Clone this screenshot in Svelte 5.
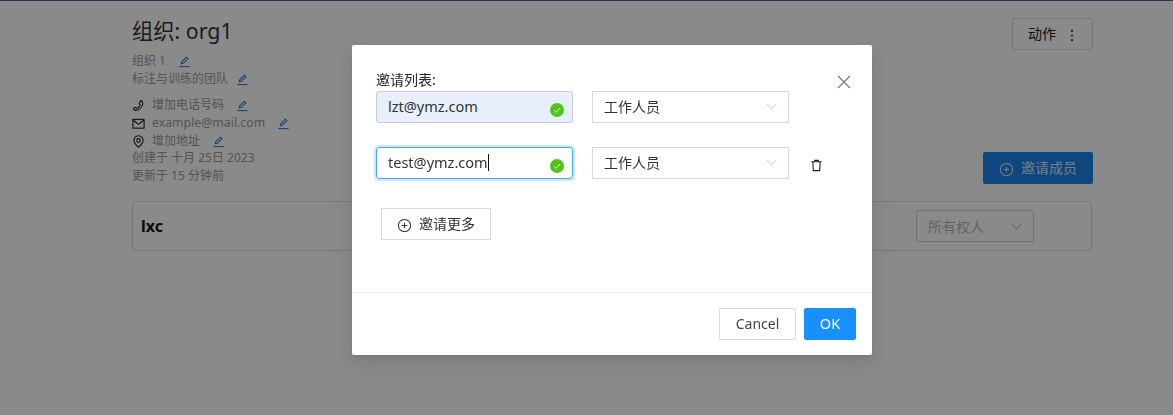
<script>
    const invites = [
        { email: 'lzt@ymz.com', autofill: true, focused: false, removable: false },
        { email: 'test@ymz.com', autofill: false, focused: true, removable: true },
    ];
</script>

<div class="page">
    <header class="top">
        <div class="info">
            <h1>组织: org1</h1>
            <p class="line"><span class="ct">组织 1</span>{@render edit()}</p>
            <p class="line">标注与训练的团队{@render edit()}</p>
            <div class="contacts">
                <p class="line">
                    <svg class="ci" viewBox="0 0 14 14" fill="none" stroke="#111" stroke-width="1.1"><path d="M9.5 1.6c1.800.6 2.600 2.600 1.700 5-1 2.700-3.600 5.200-6.500 5.600-1.600.2-2.800-.6-3-1.500-.1-.6 1.200-1.700 1.900-1.700.6 0 .9 1 1.500 1 1.200-.1 3.800-2.800 3.700-4 0-.6-1-.9-1-1.500 0-.7 1-2.100 1.700-1.900z"/></svg>
                    <span class="ct">增加电话号码</span>{@render edit()}
                </p>
                <p class="line">
                    <svg class="ci" viewBox="0 0 14 14" fill="none" stroke="#111" stroke-width="1.1"><rect x="1" y="2.500" width="12" height="9.500"/><path d="M1.500 3.500 7 8l5.500-4.500"/></svg>
                    <span class="ct mail">example@mail.com</span>{@render edit()}
                </p>
                <p class="line">
                    <svg class="ci" viewBox="0 0 14 14" fill="none" stroke="#111" stroke-width="1.1"><path d="M7 13C4 10.500 2 8.300 2 5.800a5 5 0 0 1 10 0C12 8.300 10 10.500 7 13z"/><circle cx="7" cy="5.800" r="1.900"/></svg>
                    <span class="ct">增加地址</span>{@render edit()}
                </p>
            </div>
            <p class="line created">创建于 十月 25日 2023</p>
            <p class="line">更新于 15 分钟前</p>
        </div>
        <div class="side">
            <button class="btn action">
                动作
                <svg class="dots" viewBox="0 0 4 14" fill="#222"><circle cx="2" cy="2" r="1.100"/><circle cx="2" cy="7" r="1.100"/><circle cx="2" cy="12" r="1.100"/></svg>
            </button>
            <button class="btn invite">
                <svg class="plus" viewBox="0 0 16 16" fill="none" stroke="currentColor" stroke-width="1.100"><circle cx="8" cy="8" r="6.500"/><path d="M8 5v6M5 8h6"/></svg>
                邀请成员
            </button>
        </div>
    </header>

    <section class="team">
        <strong>lxc</strong>
        <div class="owner">所有权人 <svg class="chev" viewBox="0 0 12 12" fill="none" stroke="#999" stroke-width="1"><path d="M1 3.500 6 8.500l5-5"/></svg></div>
    </section>
</div>

<div class="scrim"></div>

<div class="modal-wrap">
    <div class="modal">
        <button class="close" aria-label="Close">
            <svg viewBox="0 0 14 14" fill="none" stroke="#777" stroke-width="1.200"><path d="M1 1l12 12M13 1 1 13"/></svg>
        </button>
        <div class="body">
            <div class="label">邀请列表:</div>
            {#each invites as row}
                <div class="row">
                    <div class="input" class:autofill={row.autofill} class:focused={row.focused}>
                        <span>{row.email}</span>{#if row.focused}<i class="caret"></i>{/if}
                        <svg class="ok" viewBox="0 0 14 14"><circle cx="7" cy="7" r="7" fill="#52c41a"/><path d="M4 7.200 6.200 9.300 10 5" fill="none" stroke="#fff" stroke-width="1"/></svg>
                    </div>
                    <div class="select">
                        工作人员
                        <svg class="chev" viewBox="0 0 12 12" fill="none" stroke="#bfbfbf" stroke-width="1"><path d="M1 3.500 6 8.500l5-5"/></svg>
                    </div>
                    {#if row.removable}
                        <svg class="trash" viewBox="0 0 14 14" fill="none" stroke="#222" stroke-width="1.200"><path d="M1.500 3h11M5 3V1.500h4V3M3 3l.6 9.500h6.800L11 3"/></svg>
                    {/if}
                </div>
            {/each}
            <button class="more">
                <svg class="plus" viewBox="0 0 16 16" fill="none" stroke="#333" stroke-width="1.100"><circle cx="8" cy="8" r="6.500"/><path d="M8 5v6M5 8h6"/></svg>
                邀请更多
            </button>
        </div>
        <footer>
            <button class="cancel">Cancel</button>
            <button class="okbtn">OK</button>
        </footer>
    </div>
</div>

{#snippet edit()}
    <svg class="edit" viewBox="0 0 14 14" fill="none" stroke="#1677d2" stroke-width="1.100"><path d="M3.500 9.500 4 7.300 9 2.300l1.700 1.700-5 5z"/><path d="M1.500 12.500h11"/></svg>
{/snippet}

<style>
    :global(body) {
        margin: 0;
        background: #fbfcfd;
        font-family: "Noto Sans", "Noto Sans CJK SC", sans-serif;
        overflow: hidden;
    }

    p, h1 { margin: 0; }

    button { font-family: inherit; cursor: pointer; }

    .page {
        height: 414px;
        border-top: 1px solid #5c4f9c;
        padding: 0 81px 0 132px;
    }

    .top {
        display: flex;
        justify-content: space-between;
        padding-top: 15px;
    }

    h1 {
        font-size: 21.3px;
        font-weight: 400;
        line-height: 30px;
        color: #333;
        margin-bottom: 6px;
    }

    .line {
        display: flex;
        align-items: center;
        height: 18px;
        font-size: 12px;
        line-height: 18px;
        color: #999;
        white-space: pre;
    }

    .contacts { margin-top: 8px; }

    .created { margin-top: -1px; }

    .ci { width: 13px; height: 13px; margin-right: 7px; }

    .edit { width: 13px; height: 13px; margin-left: 8px; }

    .ct { margin-right: 4px; }

    .mail { font-size: 12.3px; }

    .side {
        display: flex;
        flex-direction: column;
        align-items: flex-end;
        margin: 2px -1px 0 0;
    }

    .btn {
        height: 32px;
        border-radius: 2px;
        font-size: 14px;
    }

    .action {
        display: flex;
        align-items: center;
        box-sizing: border-box;
        width: 81px;
        padding: 0 0 2px 15px;
        background: #fbfbfb;
        border: 1px solid #d9d9d9;
        color: #222;
    }

    .dots { width: 4px; height: 13px; margin: 5px 0 0 14px; }

    .invite {
        display: flex;
        align-items: center;
        gap: 7px;
        width: 110px;
        margin-top: 102px;
        padding: 0 0 3px 16px;
        background: #1a80e5;
        border: 0;
        color: #d8e6f5;
    }

    .plus { width: 15px; height: 15px; margin-top: 6px; flex: none; }

    .team {
        display: flex;
        align-items: center;
        justify-content: space-between;
        height: 48px;
        margin-top: 16px;
        padding: 0 57px 0 8px;
        background: #fcfcfc;
        border: 1px solid #dcdcdc;
        border-radius: 3px;
    }

    .team strong { font-size: 16px; color: #111; }

    .owner {
        display: flex;
        align-items: center;
        justify-content: space-between;
        width: 118px;
        height: 32px;
        box-sizing: border-box;
        padding: 0 11px;
        border: 1px solid #d0d0d0;
        border-radius: 2px;
        font-size: 14px;
        color: #b5b5b5;
    }

    .chev { width: 11px; height: 11px; }

    .scrim {
        position: fixed;
        inset: 0;
        background: rgba(0, 0, 0, 0.45);
    }

    .modal-wrap {
        position: fixed;
        inset: 0;
        display: flex;
        justify-content: center;
        align-items: flex-start;
        padding: 45px 0 0 51px;
    }

    .modal {
        position: relative;
        width: 520px;
        height: 310px;
        display: flex;
        flex-direction: column;
        background: #fff;
        border-radius: 2px;
        box-shadow: 0 3px 6px -4px rgba(0, 0, 0, 0.12), 0 6px 16px rgba(0, 0, 0, 0.08), 0 9px 28px 8px rgba(0, 0, 0, 0.05);
    }

    .close {
        position: absolute;
        top: 30px;
        right: 21px;
        width: 14px;
        height: 14px;
        padding: 0;
        border: 0;
        background: none;
        display: flex;
    }

    .body {
        flex: 1;
        padding: 26px 24px 0;
    }

    .label {
        font-size: 14px;
        line-height: 18px;
        color: #262626;
        height: 20px;
    }

    .row {
        display: flex;
        align-items: center;
        gap: 19px;
        height: 32px;
        margin-bottom: 24px;
        position: relative;
    }

    .input {
        position: relative;
        display: flex;
        align-items: center;
        box-sizing: border-box;
        width: 197px;
        height: 32px;
        padding: 0 11px 2px;
        border: 1px solid #d9d9d9;
        border-radius: 3px;
        font-size: 14.5px;
        color: #333;
    }

    .autofill { background: #e8f0fe; border-color: #c6ccd6; }

    .focused {
        border-color: #40a9ff;
        box-shadow: 0 0 0 2px rgba(24, 144, 255, 0.2);
    }

    .caret {
        display: inline-block;
        width: 1px;
        height: 17px;
        background: #111;
    }

    .ok {
        position: absolute;
        right: 8px;
        top: 11px;
        width: 14px;
        height: 14px;
    }

    .select {
        display: flex;
        align-items: center;
        justify-content: space-between;
        box-sizing: border-box;
        width: 197px;
        height: 32px;
        padding: 0 11px 2px;
        border: 1px solid #d9d9d9;
        font-size: 14px;
        color: #333;
    }

    .trash {
        position: absolute;
        left: 434px;
        top: 12px;
        width: 13px;
        height: 13px;
    }

    .more {
        display: flex;
        align-items: center;
        gap: 7px;
        box-sizing: border-box;
        width: 110px;
        height: 32px;
        margin: 29px 0 0 5px;
        padding: 0 0 3px 15px;
        background: #fff;
        border: 1px solid #d9d9d9;
        font-size: 14px;
        color: #333;
    }

    footer {
        display: flex;
        justify-content: flex-end;
        gap: 8px;
        height: 63px;
        box-sizing: border-box;
        padding: 15px 16px 0;
        border-top: 1px solid #f0f0f0;
    }

    footer button {
        height: 32px;
        font-size: 14px;
        border-radius: 2px;
        padding: 0 0 2px;
    }

    .cancel {
        width: 77px;
        background: #fff;
        border: 1px solid #d9d9d9;
        color: #444;
    }

    .okbtn {
        width: 52px;
        background: #1890ff;
        border: 1px solid #1890ff;
        color: #fff;
        font-size: 14.5px;
    }
</style>
